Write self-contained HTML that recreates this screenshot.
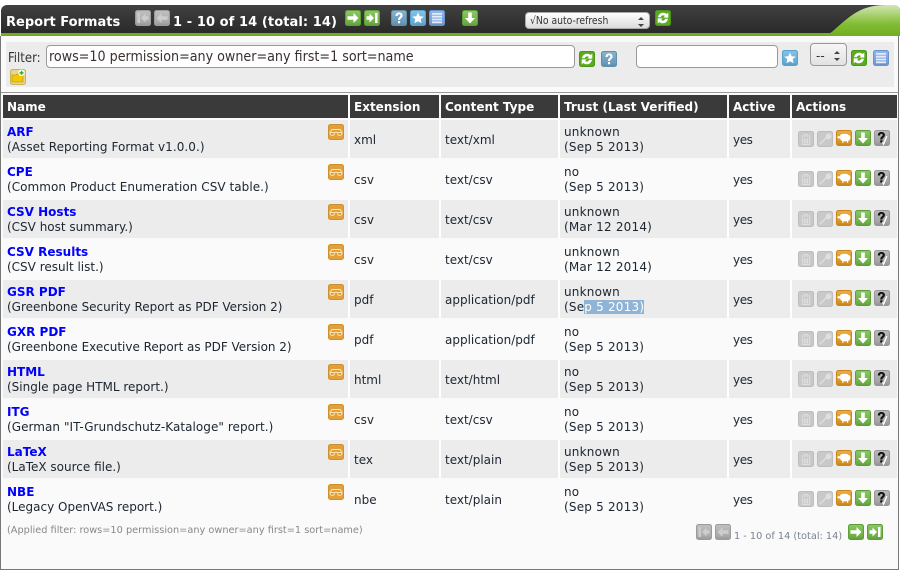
<!DOCTYPE html>
<html><head><meta charset="utf-8"><style>
html,body{margin:0;padding:0;background:#fff;width:903px;height:572px;overflow:hidden}
body{position:relative;font-family:"DejaVu Sans","Liberation Sans",sans-serif;font-size:12px;color:#1c2530}
.a{position:absolute;white-space:nowrap}
svg.i{position:absolute;width:16px;height:16px}
.th{position:absolute;top:95px;height:23px;background:#3a3a3a;color:#fff;font-weight:bold;font-size:12px;line-height:22px;padding:1px 0 0 4px;box-sizing:border-box}
.t{position:absolute;white-space:nowrap;line-height:15px;margin-top:1px}
.tr{letter-spacing:.2px}
.y{letter-spacing:-.4px}
.n{color:#00f;font-weight:bold}
.inp{position:absolute;box-sizing:border-box;background:#fff;border:1px solid #999;border-radius:4px}
.r{position:absolute;left:3px;width:894px;height:38px;background:linear-gradient(90deg,#ececec 345px,#fff 345px,#fff 347px,#ececec 347px,#ececec 436px,#fff 436px,#fff 438px,#ececec 438px,#ececec 555px,#fff 555px,#fff 557px,#ececec 557px,#ececec 724px,#fff 724px,#fff 726px,#ececec 726px,#ececec 787px,#fff 787px,#fff 789px,#ececec 789px)}
</style></head><body>
<svg width="0" height="0" style="position:absolute"><defs>
<linearGradient id="gl0" x1="0" y1="0" x2="0" y2="1"><stop offset="0" stop-color="#fff" stop-opacity=".22"/><stop offset=".55" stop-color="#fff" stop-opacity=".03"/><stop offset="1" stop-color="#000" stop-opacity=".12"/></linearGradient>
<symbol id="first" viewBox="0 0 16 16"><rect x=".5" y=".5" width="15" height="15" rx="2" fill="#adadad" stroke="#9c9c9c"/><rect x="1" y="1" width="14" height="14" rx="2" fill="url(#gl0)"/><path d="M2.500 3h2.500v10H2.500zM6 8l4.500-4.500v2.800h3v3.400h-3v2.800z" fill="#cdcdcd"/></symbol>
<symbol id="prev" viewBox="0 0 16 16"><rect x=".5" y=".5" width="15" height="15" rx="2" fill="#adadad" stroke="#9c9c9c"/><rect x="1" y="1" width="14" height="14" rx="2" fill="url(#gl0)"/><path d="M2.500 8l5-5v3.300h6v3.400h-6V13z" fill="#cdcdcd"/></symbol>
<symbol id="next" viewBox="0 0 16 16"><rect x=".5" y=".5" width="15" height="15" rx="2" fill="#6fb442" stroke="#5c9f34"/><rect x="1" y="1" width="14" height="14" rx="2" fill="url(#gl0)"/><path d="M13.500 8l-5-5v3.300h-6v3.400h6V13z" fill="#fff"/></symbol>
<symbol id="last" viewBox="0 0 16 16"><rect x=".5" y=".5" width="15" height="15" rx="2" fill="#6fb442" stroke="#5c9f34"/><rect x="1" y="1" width="14" height="14" rx="2" fill="url(#gl0)"/><path d="M13.500 3H11v10h2.500zM10 8L5.500 3.500v2.800h-3v3.400h3v2.800z" fill="#fff"/></symbol>
<symbol id="help" viewBox="0 0 16 16"><rect x=".5" y=".5" width="15" height="15" rx="2" fill="#6b9dbd" stroke="#5f8fae"/><rect x="1" y="1" width="14" height="14" rx="2" fill="url(#gl0)"/><path d="M4.500 6c0-2.300 1.500-3.500 3.600-3.500S11.600 3.700 11.600 5.500c0 2.500-2.500 2.500-2.500 4.500H7c0-3 2.400-3 2.400-4.500 0-.7-.5-1.200-1.300-1.200-.9 0-1.400.6-1.400 1.700zM7 11h2.100v2.300H7z" fill="#fff"/></symbol>
<symbol id="star" viewBox="0 0 16 16"><rect x=".5" y=".5" width="15" height="15" rx="2" fill="#64afdc" stroke="#5aa1cb"/><rect x="1" y="1" width="14" height="14" rx="2" fill="url(#gl0)"/><path d="M8 2.500l1.700 3.700 4 .4-3 2.700.9 4L8 11.300l-3.600 2 .9-4-3-2.700 4-.4z" fill="#fff"/></symbol>
<symbol id="list" viewBox="0 0 16 16"><rect x=".5" y=".5" width="15" height="15" rx="2" fill="#78a2df" stroke="#6c94cc"/><rect x="1" y="1" width="14" height="14" rx="2" fill="url(#gl0)"/><path d="M3 3h10v1.800H3zM3 5.800h10v1.800H3zM3 8.600h10v1.800H3zM3 11.400h10v1.800H3z" fill="#e2ebf8"/></symbol>
<symbol id="dl" viewBox="0 0 16 16"><rect x=".5" y=".5" width="15" height="15" rx="2" fill="#6fb442" stroke="#5c9f34"/><rect x="1" y="1" width="14" height="14" rx="2" fill="url(#gl0)"/><path d="M6.200 2.500h3.600V8H13l-5 5.500L3 8h3.200z" fill="#fff"/></symbol>
<symbol id="ref" viewBox="0 0 16 16"><rect x=".5" y=".5" width="15" height="15" rx="2" fill="#5aab1f" stroke="#4d9518"/><path d="M3 7.200C3.500 4.300 5.700 2.700 8.200 2.700c1.400 0 2.600.5 3.500 1.300L13.300 2.600v5H8.300l1.600-1.600c-.5-.4-1-.6-1.700-.6-1.100 0-2 .6-2.400 1.800zM13 8.800c-.5 2.900-2.700 4.500-5.200 4.500-1.400 0-2.600-.5-3.500-1.300l-1.600 1.400v-5h5L6.100 10c.5.400 1 .6 1.700.6 1.100 0 2-.6 2.400-1.800z" fill="#fff"/></symbol>
<symbol id="gl" viewBox="0 0 16 16"><rect x=".5" y=".5" width="15" height="15" rx="2" fill="#e3a03a" stroke="#cf9030"/><path d="M1.800 8.500l2.200-3h8l2.200 3M2 8.500h4.500c.3 2-.7 3-2.200 3S1.800 10.500 2 8.500zM9.500 8.500H14c.2 2-.8 3-2.300 3s-2.500-1-2.200-3zM6.500 8.500c1-.6 2-.6 3 0" fill="none" stroke="#f9e6b8" stroke-width=".9"/></symbol>
<symbol id="trash" viewBox="0 0 16 16"><rect x=".5" y=".5" width="15" height="15" rx="2" fill="#c9c9c9" stroke="#bdbdbd"/><path d="M3.500 5h9M6 3.500h4M4.500 6.500v7h7v-7M6.500 7.500v5M8 7.500v5M9.500 7.500v5" fill="none" stroke="#dedede" stroke-width="1"/></symbol>
<symbol id="edit" viewBox="0 0 16 16"><rect x=".5" y=".5" width="15" height="15" rx="2" fill="#c9c9c9" stroke="#bdbdbd"/><path d="M2.800 13.200l6.500-6.500M9.300 6.700c-.5-1.800 1-3.900 3.400-3.500L11 5l.8 1.100 1.900-1.400c.2 2.200-2 3.500-3.600 2.700" fill="#e0e0e0" stroke="#e0e0e0" stroke-width="1.300"/></symbol>
<symbol id="sheep" viewBox="0 0 16 16"><rect x=".5" y=".5" width="15" height="15" rx="2" fill="#e0961c" stroke="#c9861a"/><rect x="1" y="1" width="14" height="14" rx="2" fill="url(#gl0)"/><path d="M1.200 7.200c.4-1 1.600-1.300 2.500-1C4.500 4.300 6 3.700 7.500 4c1.600-.6 3.800-.3 4.700.9 1.500.3 2.500 1.500 2.200 3-.2 1.500-1 2.800-2.200 3V12.700h-1.300v-1.500H7.600V12.700H6.300v-1.700C5 10.500 4.200 9.300 3.900 8.400c-1.100.3-2.200 0-2.700-1.200z" fill="#fff"/></symbol>
<symbol id="verify" viewBox="0 0 16 16"><rect x=".5" y=".5" width="15" height="15" rx="2" fill="#a6a6a6" stroke="#979797"/><rect x="1" y="1" width="14" height="14" rx="2" fill="url(#gl0)"/><path d="M3.800 5.500C3.800 3.200 5.300 2 7.400 2s3.500 1.200 3.500 3c0 2.500-2.500 2.500-2.500 4.500H6.300c0-3 2.400-3 2.400-4.500 0-.7-.5-1.200-1.300-1.200-.9 0-1.400.6-1.400 1.700zM6.300 10.300h2.100v2.300H6.300z" fill="#111"/><path d="M8.500 12.300l1.100 1.800 3.200-8" fill="none" stroke="#fff" stroke-width="1.400"/></symbol>
<symbol id="nf" viewBox="0 0 16 16"><rect x=".5" y=".5" width="15" height="15" rx="2" fill="#e6d68f" stroke="#c7b35a"/><path d="M2 6h4l1-1h6v8H2z" fill="#f6c700" stroke="#a98f12" stroke-width=".6"/><circle cx="11.500" cy="3.800" r="3.200" fill="#fff"/><path d="M10.800 1.800h1.500v1.300h1.300v1.500h-1.300v1.300h-1.500V4.600H9.500V3.100h1.300z" fill="#2cae2c"/></symbol>
</defs></svg>

<!-- window -->
<div class="a" style="left:0;top:36px;width:899px;height:534px;box-sizing:border-box;border-style:solid;border-color:#777;border-width:0 1px 1px 1px;background:#fafafa"></div>
<div class="a" style="left:1px;top:5px;width:899px;height:31px;background:linear-gradient(#414141,#272727);border-radius:6px 6px 0 0"></div>
<div class="a" style="left:1px;top:33px;width:899px;height:3px;background:#70ad1f"></div>
<svg class="a" style="left:820px;top:5px" width="80" height="31" viewBox="0 0 80 31"><defs><linearGradient id="wg" x1="0" y1="0" x2="0" y2="1"><stop offset="0" stop-color="#d3e6b4"/><stop offset=".6" stop-color="#84bd36"/><stop offset="1" stop-color="#70ad1f"/></linearGradient></defs><path d="M0 31C5 30 9 30 14 25 20 20 28 12 37 7 46 2 55 0 66 0h8c4 0 6 3 6 6v25z" fill="url(#wg)"/></svg>
<div class="a" style="left:6px;top:14px;color:#fff;font-weight:bold;font-size:13px;line-height:17px">Report Formats</div>
<svg class="i" style="left:135px;top:10px"><use href="#first"/></svg>
<svg class="i" style="left:154px;top:10px"><use href="#prev"/></svg>
<div class="a" style="left:173px;top:14px;color:#fff;font-weight:bold;font-size:13px;line-height:17px;letter-spacing:.08px">1 - 10 of 14 (total: 14)</div>
<svg class="i" style="left:345px;top:10px"><use href="#next"/></svg>
<svg class="i" style="left:364px;top:10px"><use href="#last"/></svg>
<svg class="i" style="left:391px;top:10px"><use href="#help"/></svg>
<svg class="i" style="left:410px;top:10px"><use href="#star"/></svg>
<svg class="i" style="left:429px;top:10px"><use href="#list"/></svg>
<svg class="i" style="left:462px;top:10px"><use href="#dl"/></svg>
<div class="a" style="left:525px;top:12px;width:125px;height:17px;box-sizing:border-box;border:1px solid #aaa;border-radius:4px;background:linear-gradient(#fff,#dcdcdc);font-size:10.3px;line-height:17px;padding-left:4px;color:#333;font-family:'DejaVu Sans Condensed','DejaVu Sans',sans-serif">√No auto-refresh</div>
<svg class="a" style="left:636px;top:16px" width="10" height="12"><path d="M2 4l3-3 3 3zM2 8l3 3 3-3z" fill="#444"/></svg>
<svg class="i" style="left:655px;top:10px"><use href="#ref"/></svg>

<!-- filter -->
<div class="a" style="left:6px;top:42px;width:888px;height:45px;background:#ececec"></div>
<div class="a" style="left:8px;top:51px;font-size:13px;line-height:15px;color:#333;font-family:'DejaVu Sans Condensed','DejaVu Sans',sans-serif">Filter:</div>
<div class="inp" style="left:46px;top:45px;width:529px;height:23px;font-size:14.15px;line-height:21px;padding:1px 0 0 2px;color:#3b3030;font-family:'DejaVu Sans Condensed','DejaVu Sans',sans-serif;white-space:nowrap">rows=10 permission=any owner=any first=1 sort=name</div>
<svg class="i" style="left:579px;top:51px"><use href="#ref"/></svg>
<svg class="i" style="left:601px;top:51px"><use href="#help"/></svg>
<div class="inp" style="left:636px;top:45px;width:142px;height:23px"></div>
<svg class="i" style="left:782px;top:50px"><use href="#star"/></svg>
<div class="inp" style="left:810px;top:43px;width:37px;height:23px;background:linear-gradient(#f7f7f7,#e2e2e2);font-size:12px;line-height:21px;padding:2px 0 0 5px;color:#333">--</div>
<svg class="a" style="left:832px;top:49px" width="10" height="14"><path d="M2 5l3-3 3 3zM2 9l3 3 3-3z" fill="#444"/></svg>
<svg class="i" style="left:851px;top:50px"><use href="#ref"/></svg>
<svg class="i" style="left:873px;top:50px"><use href="#list"/></svg>
<svg class="i" style="left:10px;top:69px"><use href="#nf"/></svg>

<!-- separator -->
<div class="a" style="left:1px;top:92px;width:897px;height:1px;background:#999"></div>

<!-- table head -->
<div class="th" style="left:3px;width:345px">Name</div>
<div class="th" style="left:350px;width:89px">Extension</div>
<div class="th" style="left:441px;width:117px">Content Type</div>
<div class="th" style="left:560px;width:167px">Trust (Last Verified)</div>
<div class="th" style="left:729px;width:61px">Active</div>
<div class="th" style="left:792px;width:105px">Actions</div>

<!-- row backgrounds -->
<div class="r" style="top:120px"></div>
<div class="r" style="top:200px"></div>
<div class="r" style="top:280px"></div>
<div class="r" style="top:360px"></div>
<div class="r" style="top:440px"></div>

<!-- rows -->
<div class="t" style="left:7px;top:124px"><span class="n">ARF</span><br><span style="letter-spacing:.06px">(Asset Reporting Format v1.0.0.)</span></div>
<svg class="i" style="left:328px;top:124px"><use href="#gl"/></svg>
<div class="t" style="left:354px;top:132px">xml</div><div class="t" style="left:445px;top:132px">text/xml</div>
<div class="t tr" style="left:564px;top:124px">unknown<br>(Sep 5 2013)</div><div class="t y" style="left:733px;top:132px">yes</div>
<svg class="i" style="left:798px;top:131px"><use href="#trash"/></svg><svg class="i" style="left:817px;top:131px"><use href="#edit"/></svg><svg class="i" style="left:836px;top:130px"><use href="#sheep"/></svg><svg class="i" style="left:855px;top:130px"><use href="#dl"/></svg><svg class="i" style="left:874px;top:130px"><use href="#verify"/></svg>

<div class="t" style="left:7px;top:164px"><span class="n">CPE</span><br><span style="letter-spacing:.05px">(Common Product Enumeration CSV table.)</span></div>
<svg class="i" style="left:328px;top:164px"><use href="#gl"/></svg>
<div class="t" style="left:354px;top:172px">csv</div><div class="t" style="left:445px;top:172px">text/csv</div>
<div class="t tr" style="left:564px;top:164px">no<br>(Sep 5 2013)</div><div class="t y" style="left:733px;top:172px">yes</div>
<svg class="i" style="left:798px;top:171px"><use href="#trash"/></svg><svg class="i" style="left:817px;top:171px"><use href="#edit"/></svg><svg class="i" style="left:836px;top:170px"><use href="#sheep"/></svg><svg class="i" style="left:855px;top:170px"><use href="#dl"/></svg><svg class="i" style="left:874px;top:170px"><use href="#verify"/></svg>

<div class="t" style="left:7px;top:204px"><span class="n">CSV Hosts</span><br>(CSV host summary.)</div>
<svg class="i" style="left:328px;top:204px"><use href="#gl"/></svg>
<div class="t" style="left:354px;top:212px">csv</div><div class="t" style="left:445px;top:212px">text/csv</div>
<div class="t tr" style="left:564px;top:204px">unknown<br>(Mar 12 2014)</div><div class="t y" style="left:733px;top:212px">yes</div>
<svg class="i" style="left:798px;top:211px"><use href="#trash"/></svg><svg class="i" style="left:817px;top:211px"><use href="#edit"/></svg><svg class="i" style="left:836px;top:210px"><use href="#sheep"/></svg><svg class="i" style="left:855px;top:210px"><use href="#dl"/></svg><svg class="i" style="left:874px;top:210px"><use href="#verify"/></svg>

<div class="t" style="left:7px;top:244px"><span class="n">CSV Results</span><br>(CSV result list.)</div>
<svg class="i" style="left:328px;top:244px"><use href="#gl"/></svg>
<div class="t" style="left:354px;top:252px">csv</div><div class="t" style="left:445px;top:252px">text/csv</div>
<div class="t tr" style="left:564px;top:244px">unknown<br>(Mar 12 2014)</div><div class="t y" style="left:733px;top:252px">yes</div>
<svg class="i" style="left:798px;top:251px"><use href="#trash"/></svg><svg class="i" style="left:817px;top:251px"><use href="#edit"/></svg><svg class="i" style="left:836px;top:250px"><use href="#sheep"/></svg><svg class="i" style="left:855px;top:250px"><use href="#dl"/></svg><svg class="i" style="left:874px;top:250px"><use href="#verify"/></svg>

<div class="t" style="left:7px;top:284px"><span class="n">GSR PDF</span><br><span style="letter-spacing:-.02px">(Greenbone Security Report as PDF Version 2)</span></div>
<svg class="i" style="left:328px;top:284px"><use href="#gl"/></svg>
<div class="t" style="left:354px;top:292px">pdf</div><div class="t" style="left:445px;top:292px">application/pdf</div>
<div class="t tr" style="left:564px;top:284px">unknown<br>(Se<span style="background:#8fb4d6;color:#fff">p 5 2013)</span></div><div class="t y" style="left:733px;top:292px">yes</div>
<svg class="i" style="left:798px;top:291px"><use href="#trash"/></svg><svg class="i" style="left:817px;top:291px"><use href="#edit"/></svg><svg class="i" style="left:836px;top:290px"><use href="#sheep"/></svg><svg class="i" style="left:855px;top:290px"><use href="#dl"/></svg><svg class="i" style="left:874px;top:290px"><use href="#verify"/></svg>

<div class="t" style="left:7px;top:324px"><span class="n">GXR PDF</span><br><span style="letter-spacing:-.02px">(Greenbone Executive Report as PDF Version 2)</span></div>
<svg class="i" style="left:328px;top:324px"><use href="#gl"/></svg>
<div class="t" style="left:354px;top:332px">pdf</div><div class="t" style="left:445px;top:332px">application/pdf</div>
<div class="t tr" style="left:564px;top:324px">no<br>(Sep 5 2013)</div><div class="t y" style="left:733px;top:332px">yes</div>
<svg class="i" style="left:798px;top:331px"><use href="#trash"/></svg><svg class="i" style="left:817px;top:331px"><use href="#edit"/></svg><svg class="i" style="left:836px;top:330px"><use href="#sheep"/></svg><svg class="i" style="left:855px;top:330px"><use href="#dl"/></svg><svg class="i" style="left:874px;top:330px"><use href="#verify"/></svg>

<div class="t" style="left:7px;top:364px"><span class="n">HTML</span><br>(Single page HTML report.)</div>
<svg class="i" style="left:328px;top:364px"><use href="#gl"/></svg>
<div class="t" style="left:354px;top:372px">html</div><div class="t" style="left:445px;top:372px">text/html</div>
<div class="t tr" style="left:564px;top:364px">no<br>(Sep 5 2013)</div><div class="t y" style="left:733px;top:372px">yes</div>
<svg class="i" style="left:798px;top:371px"><use href="#trash"/></svg><svg class="i" style="left:817px;top:371px"><use href="#edit"/></svg><svg class="i" style="left:836px;top:370px"><use href="#sheep"/></svg><svg class="i" style="left:855px;top:370px"><use href="#dl"/></svg><svg class="i" style="left:874px;top:370px"><use href="#verify"/></svg>

<div class="t" style="left:7px;top:404px"><span class="n">ITG</span><br><span style="letter-spacing:.05px">(German "IT-Grundschutz-Kataloge" report.)</span></div>
<svg class="i" style="left:328px;top:404px"><use href="#gl"/></svg>
<div class="t" style="left:354px;top:412px">csv</div><div class="t" style="left:445px;top:412px">text/csv</div>
<div class="t tr" style="left:564px;top:404px">no<br>(Sep 5 2013)</div><div class="t y" style="left:733px;top:412px">yes</div>
<svg class="i" style="left:798px;top:411px"><use href="#trash"/></svg><svg class="i" style="left:817px;top:411px"><use href="#edit"/></svg><svg class="i" style="left:836px;top:410px"><use href="#sheep"/></svg><svg class="i" style="left:855px;top:410px"><use href="#dl"/></svg><svg class="i" style="left:874px;top:410px"><use href="#verify"/></svg>

<div class="t" style="left:7px;top:444px"><span class="n">LaTeX</span><br>(LaTeX source file.)</div>
<svg class="i" style="left:328px;top:444px"><use href="#gl"/></svg>
<div class="t" style="left:354px;top:452px">tex</div><div class="t" style="left:445px;top:452px">text/plain</div>
<div class="t tr" style="left:564px;top:444px">unknown<br>(Sep 5 2013)</div><div class="t y" style="left:733px;top:452px">yes</div>
<svg class="i" style="left:798px;top:451px"><use href="#trash"/></svg><svg class="i" style="left:817px;top:451px"><use href="#edit"/></svg><svg class="i" style="left:836px;top:450px"><use href="#sheep"/></svg><svg class="i" style="left:855px;top:450px"><use href="#dl"/></svg><svg class="i" style="left:874px;top:450px"><use href="#verify"/></svg>

<div class="t" style="left:7px;top:484px"><span class="n">NBE</span><br>(Legacy OpenVAS report.)</div>
<svg class="i" style="left:328px;top:484px"><use href="#gl"/></svg>
<div class="t" style="left:354px;top:492px">nbe</div><div class="t" style="left:445px;top:492px">text/plain</div>
<div class="t tr" style="left:564px;top:484px">no<br>(Sep 5 2013)</div><div class="t y" style="left:733px;top:492px">yes</div>
<svg class="i" style="left:798px;top:491px"><use href="#trash"/></svg><svg class="i" style="left:817px;top:491px"><use href="#edit"/></svg><svg class="i" style="left:836px;top:490px"><use href="#sheep"/></svg><svg class="i" style="left:855px;top:490px"><use href="#dl"/></svg><svg class="i" style="left:874px;top:490px"><use href="#verify"/></svg>

<!-- footer -->
<div class="a" style="left:7px;top:524px;font-size:9.75px;line-height:14px;color:#888">(Applied filter: rows=10 permission=any owner=any first=1 sort=name)</div>
<svg class="i" style="left:696px;top:524px"><use href="#first"/></svg>
<svg class="i" style="left:715px;top:524px"><use href="#prev"/></svg>
<div class="a" style="left:734px;top:530px;font-size:9.75px;line-height:14px;color:#7a8290">1 - 10 of 14 (total: 14)</div>
<svg class="i" style="left:848px;top:524px"><use href="#next"/></svg>
<svg class="i" style="left:867px;top:524px"><use href="#last"/></svg>
</body></html>
